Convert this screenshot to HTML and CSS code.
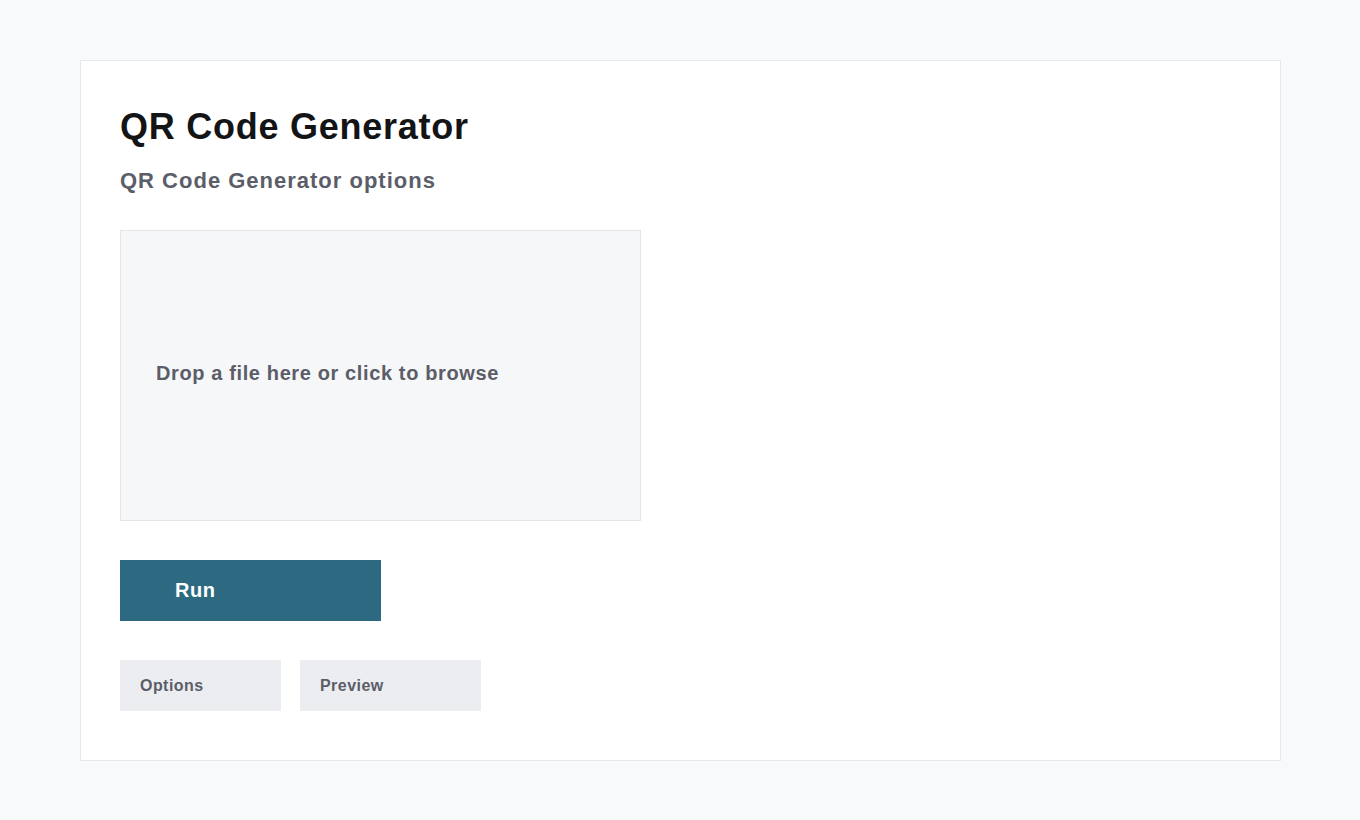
FILE: index.html
```html
<!DOCTYPE html>
<html lang="en">
<head>
<meta charset="utf-8">
<title>QR Code Generator</title>
<link rel="stylesheet" href="styles.css">
</head>
<body>
<main class="card">
  <h1 class="title">QR Code Generator</h1>
  <h2 class="subtitle">QR Code Generator options</h2>
  <div class="dropzone">Drop a file here or click to browse</div>
  <button class="run">Run</button>
  <div class="tabs">
    <button class="tab tab-options">Options</button>
    <button class="tab tab-preview">Preview</button>
  </div>
</main>
</body>
</html>
```
FILE: styles.css
```css
html, body {
  margin: 0;
  padding: 0;
  background: #f8f9fa;
  font-family: "Liberation Sans", Arial, sans-serif;
}
.card {
  box-sizing: border-box;
  margin: 60px 0 0 80px;
  width: 1201px;
  height: 701px;
  padding: 40px 39px;
  background: #ffffff;
  border: 1px solid #e6e8eb;
  display: flex;
  flex-direction: column;
  align-items: flex-start;
}
.title {
  margin: 0;
  font-size: 36px;
  line-height: 52px;
  font-weight: 700;
  letter-spacing: 0.75px;
  color: #131416;
}
.subtitle {
  margin: 12px 0 0;
  font-size: 22px;
  line-height: 32px;
  font-weight: 700;
  letter-spacing: 1px;
  color: #5b5d68;
}
.dropzone {
  box-sizing: border-box;
  margin-top: 33px;
  width: 521px;
  height: 291px;
  background: #f6f7f8;
  border: 1px solid #e3e5e8;
  display: flex;
  align-items: center;
  padding: 0 35px 5px;
  font-size: 20px;
  font-weight: 700;
  letter-spacing: 0.62px;
  color: #5b5d68;
}
.run {
  margin-top: 39px;
  width: 261px;
  height: 61px;
  border: 0;
  background: #2d6a81;
  color: #ffffff;
  font-family: inherit;
  font-size: 20px;
  font-weight: 700;
  letter-spacing: 0.5px;
  text-align: left;
  padding: 0 0 0 55px;
}
.tabs {
  margin-top: 39px;
  display: flex;
  gap: 19px;
}
.tab {
  height: 51px;
  border: 0;
  background: #ebedf1;
  color: #5b5d68;
  font-family: inherit;
  font-size: 16px;
  font-weight: 700;
  letter-spacing: 0.45px;
  text-align: left;
  padding: 0 20px;
}
.tab-options { width: 161px; }
.tab-preview { width: 181px; }
```
